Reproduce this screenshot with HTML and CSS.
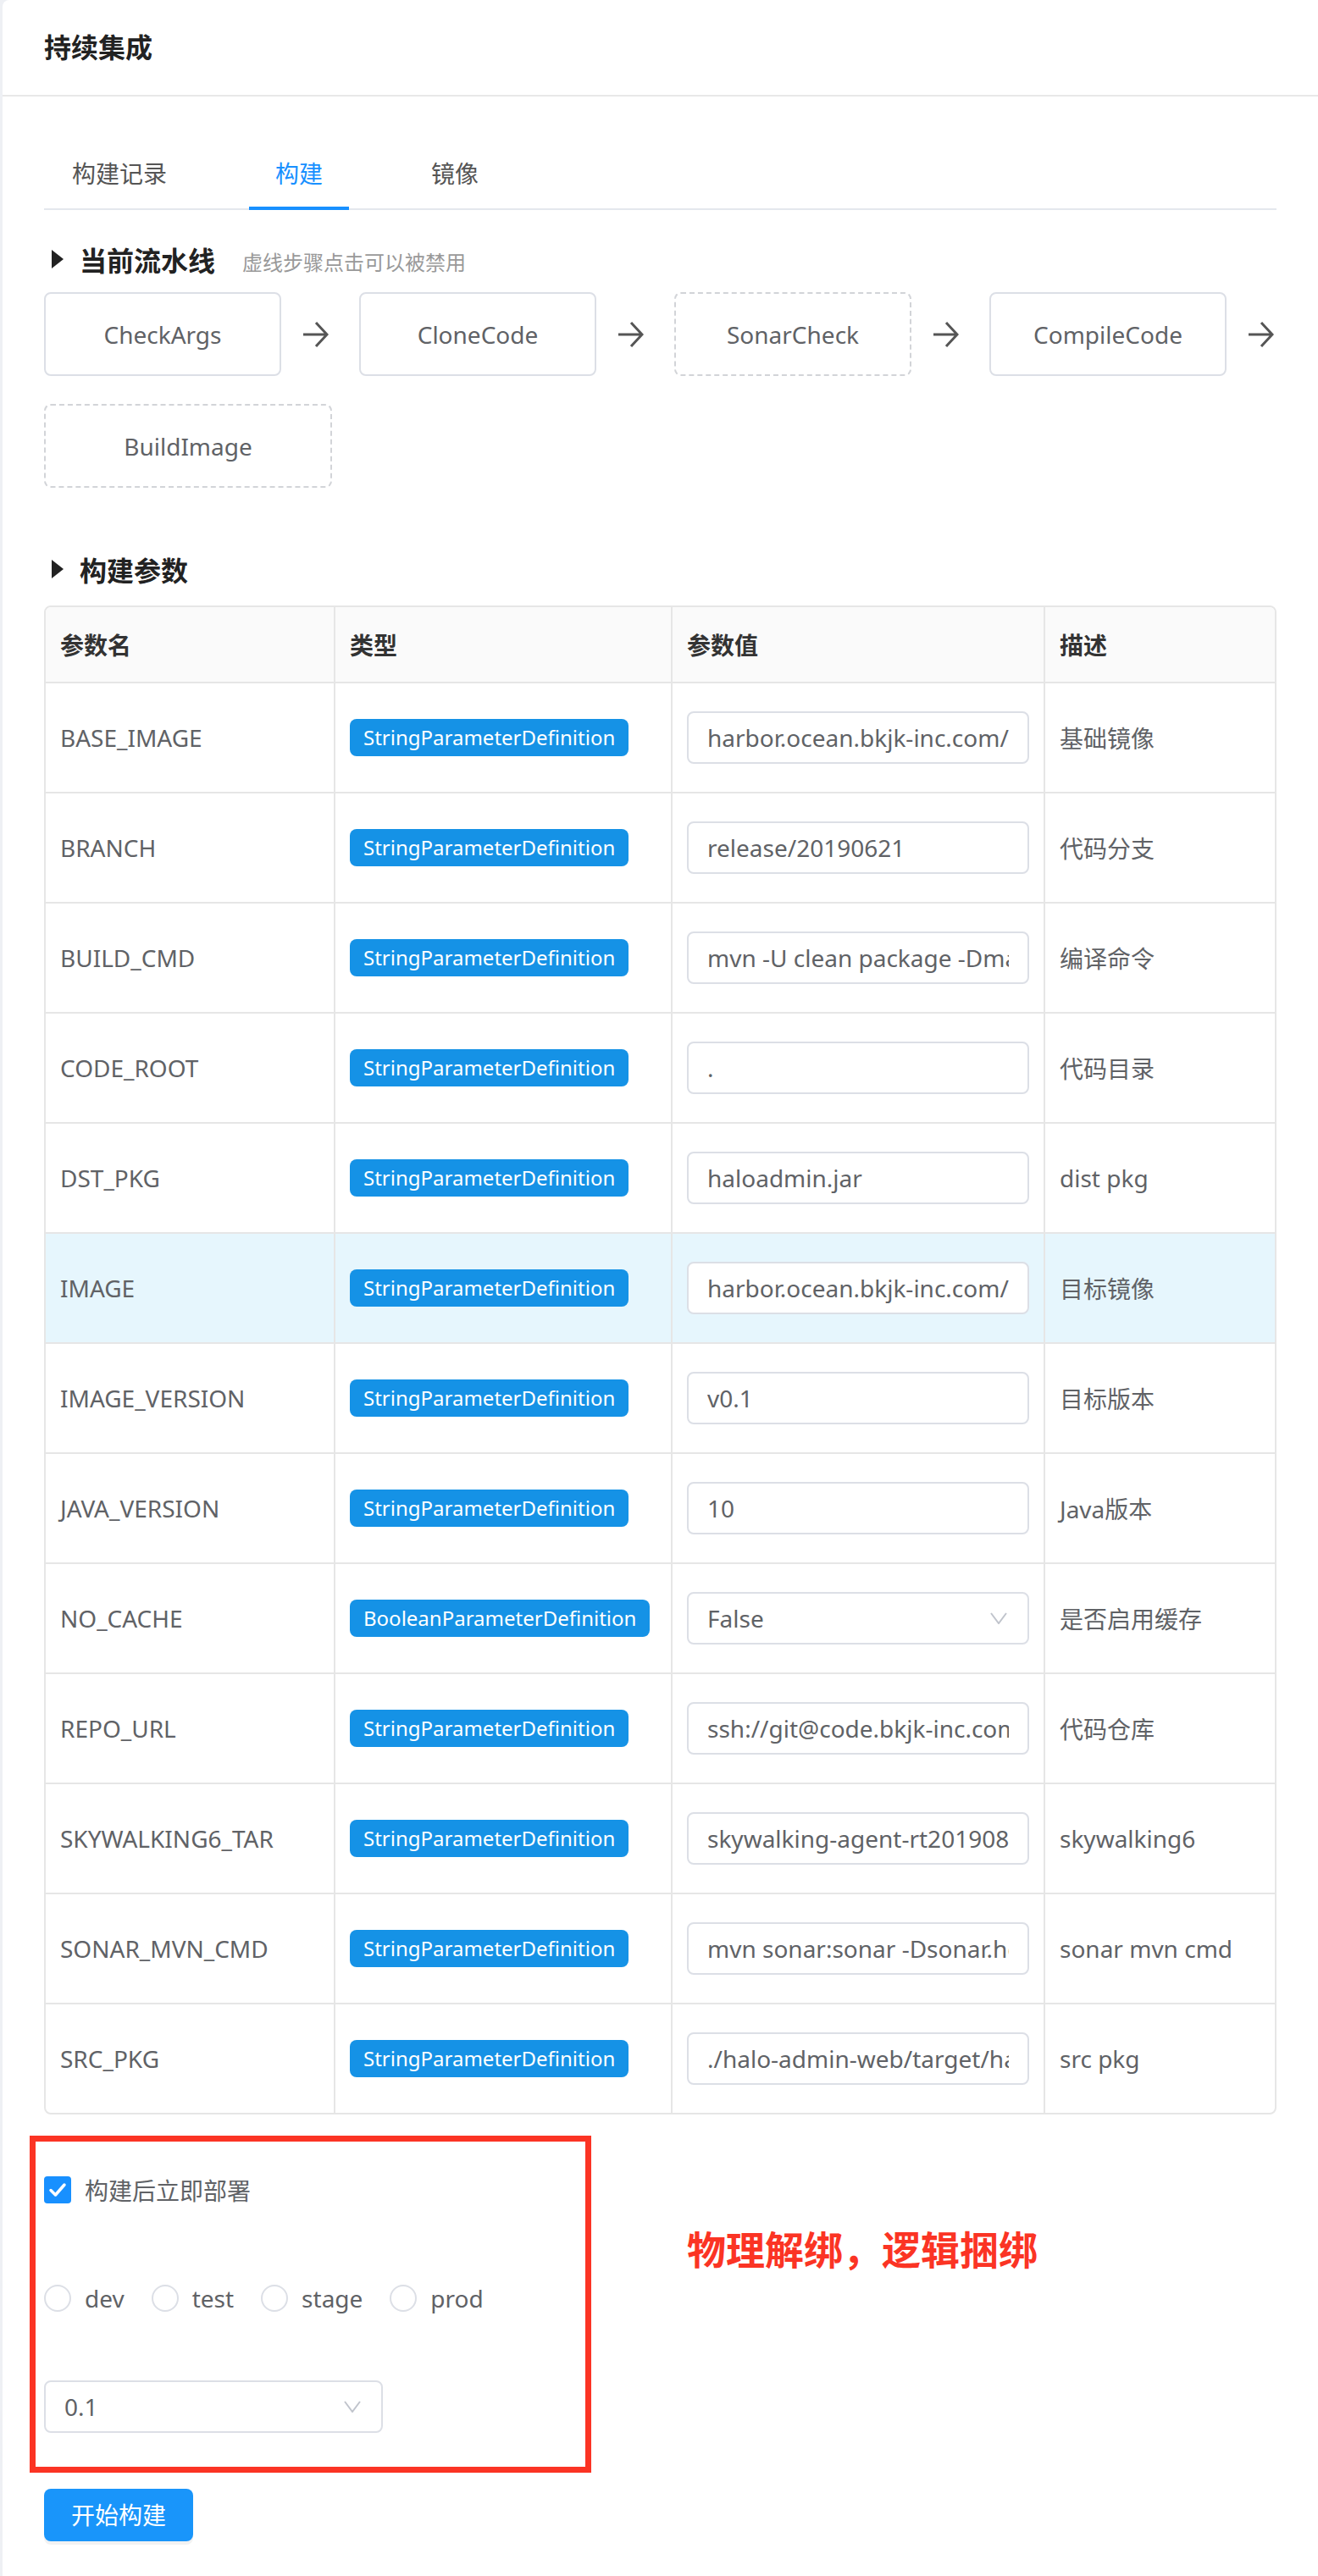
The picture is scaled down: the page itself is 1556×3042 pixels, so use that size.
FILE: index.html
```html
<!DOCTYPE html>
<html lang="zh-CN">
<head>
<meta charset="utf-8">
<title>持续集成</title>
<link rel="stylesheet" href="styles.css">
</head>
<body>
<div class="card">
  <div class="card-header"><span class="card-title">持续集成</span></div>
  <div class="card-body">
    <div class="tabs">
      <div class="tab">构建记录</div>
      <div class="tab active">构建</div>
      <div class="tab">镜像</div>
    </div>

    <div class="section-title section-first">
      <span class="caret"></span><span class="section-name">当前流水线</span><span class="section-hint">虚线步骤点击可以被禁用</span>
    </div>
    <div class="pipeline">
      <div class="step-group">
        <div class="step">CheckArgs</div>
        <svg class="arrow" viewBox="0 0 32 32"><path d="M2 16H30M17 2L30 16L17 30"/></svg>
      </div>
      <div class="step-group">
        <div class="step">CloneCode</div>
        <svg class="arrow" viewBox="0 0 32 32"><path d="M2 16H30M17 2L30 16L17 30"/></svg>
      </div>
      <div class="step-group">
        <div class="step step-dashed">SonarCheck</div>
        <svg class="arrow" viewBox="0 0 32 32"><path d="M2 16H30M17 2L30 16L17 30"/></svg>
      </div>
      <div class="step-group">
        <div class="step">CompileCode</div>
        <svg class="arrow" viewBox="0 0 32 32"><path d="M2 16H30M17 2L30 16L17 30"/></svg>
      </div>
      <div class="step-group">
        <div class="step step-dashed step-wide">BuildImage</div>
      </div>
    </div>

    <div class="section-title section-second">
      <span class="caret"></span><span class="section-name">构建参数</span>
    </div>
    <div class="table">
      <div class="tr thead">
        <div class="td th">参数名</div><div class="td th">类型</div><div class="td th">参数值</div><div class="td th">描述</div>
      </div>
      <div class="tr">
        <div class="td">BASE_IMAGE</div>
        <div class="td"><span class="tag">StringParameterDefinition</span></div>
        <div class="td"><input class="input" readonly value="harbor.ocean.bkjk-inc.com/common/openjdk:10"></div>
        <div class="td">基础镜像</div>
      </div>
      <div class="tr">
        <div class="td">BRANCH</div>
        <div class="td"><span class="tag">StringParameterDefinition</span></div>
        <div class="td"><input class="input" readonly value="release/20190621"></div>
        <div class="td">代码分支</div>
      </div>
      <div class="tr">
        <div class="td">BUILD_CMD</div>
        <div class="td"><span class="tag">StringParameterDefinition</span></div>
        <div class="td"><input class="input" readonly value="mvn -U clean package -Dmaven.test.skip=true"></div>
        <div class="td">编译命令</div>
      </div>
      <div class="tr">
        <div class="td">CODE_ROOT</div>
        <div class="td"><span class="tag">StringParameterDefinition</span></div>
        <div class="td"><input class="input" readonly value="."></div>
        <div class="td">代码目录</div>
      </div>
      <div class="tr">
        <div class="td">DST_PKG</div>
        <div class="td"><span class="tag">StringParameterDefinition</span></div>
        <div class="td"><input class="input" readonly value="haloadmin.jar"></div>
        <div class="td">dist pkg</div>
      </div>
      <div class="tr hl">
        <div class="td">IMAGE</div>
        <div class="td"><span class="tag">StringParameterDefinition</span></div>
        <div class="td"><input class="input" readonly value="harbor.ocean.bkjk-inc.com/library/halo-admin"></div>
        <div class="td">目标镜像</div>
      </div>
      <div class="tr">
        <div class="td">IMAGE_VERSION</div>
        <div class="td"><span class="tag">StringParameterDefinition</span></div>
        <div class="td"><input class="input" readonly value="v0.1"></div>
        <div class="td">目标版本</div>
      </div>
      <div class="tr">
        <div class="td">JAVA_VERSION</div>
        <div class="td"><span class="tag">StringParameterDefinition</span></div>
        <div class="td"><input class="input" readonly value="10"></div>
        <div class="td">Java版本</div>
      </div>
      <div class="tr">
        <div class="td">NO_CACHE</div>
        <div class="td"><span class="tag">BooleanParameterDefinition</span></div>
        <div class="td">
          <div class="select"><span>False</span><svg class="chevron" viewBox="0 0 20 14"><polyline points="1,1 10,13 19,1"/></svg></div>
        </div>
        <div class="td">是否启用缓存</div>
      </div>
      <div class="tr">
        <div class="td">REPO_URL</div>
        <div class="td"><span class="tag">StringParameterDefinition</span></div>
        <div class="td"><input class="input" readonly value="ssh://git@code.bkjk-inc.com/halo/halo-admin.git"></div>
        <div class="td">代码仓库</div>
      </div>
      <div class="tr">
        <div class="td">SKYWALKING6_TAR</div>
        <div class="td"><span class="tag">StringParameterDefinition</span></div>
        <div class="td"><input class="input" readonly value="skywalking-agent-rt20190801.tar.gz"></div>
        <div class="td">skywalking6</div>
      </div>
      <div class="tr">
        <div class="td">SONAR_MVN_CMD</div>
        <div class="td"><span class="tag">StringParameterDefinition</span></div>
        <div class="td"><input class="input" readonly value="mvn sonar:sonar -Dsonar.host.url=http://sonar"></div>
        <div class="td">sonar mvn cmd</div>
      </div>
      <div class="tr">
        <div class="td">SRC_PKG</div>
        <div class="td"><span class="tag">StringParameterDefinition</span></div>
        <div class="td"><input class="input" readonly value="./halo-admin-web/target/halo-admin.jar"></div>
        <div class="td">src pkg</div>
      </div>
    </div>

    <div class="deploy">
      <div class="deploy-box">
        <div class="form-row">
          <span class="checkbox"><svg viewBox="0 0 32 32"><path d="M8 16.5L13.5 22L24 10"/></svg></span>
          <span class="form-label">构建后立即部署</span>
        </div>
        <div class="form-row">
          <span class="radio"><span class="radio-dot"></span><span class="form-label">dev</span></span>
          <span class="radio"><span class="radio-dot"></span><span class="form-label">test</span></span>
          <span class="radio"><span class="radio-dot"></span><span class="form-label">stage</span></span>
          <span class="radio"><span class="radio-dot"></span><span class="form-label">prod</span></span>
        </div>
        <div class="form-row">
          <div class="select deploy-select"><span>0.1</span><svg class="chevron" viewBox="0 0 20 14"><polyline points="1,1 10,13 19,1"/></svg></div>
        </div>
      </div>
      <div class="annotation">物理解绑，逻辑捆绑</div>
    </div>

    <div class="btn">开始构建</div>
  </div>
</div>
</body>
</html>
```

FILE: styles.css
```css
* {
  box-sizing: border-box;
}

body {
  margin: 0;
  background: #eef0f4;
  font-family: "Noto Sans", "Noto Sans CJK SC", sans-serif;
  color: #606266;
}

.card {
  margin-left: 3px;
  background: #fff;
  border-top-left-radius: 8px;
  min-height: 3042px;
}

.card-header {
  height: 114px;
  border-bottom: 2px solid #e8e8e8;
  display: flex;
  align-items: center;
  padding-left: 49px;
}

.card-title {
  font-size: 32px;
  line-height: 48px;
  font-weight: 600;
  color: #222;
}

.card-body {
  padding: 50px 49px 0 49px;
}

/* tabs */
.tabs {
  display: flex;
  gap: 66px;
  padding-left: 2px;
  border-bottom: 2px solid #e4e7ed;
}

.tab {
  position: relative;
  height: 82px;
  line-height: 82px;
  padding: 0 31px;
  font-size: 28px;
  color: #555;
}

.tab.active {
  color: #1890ff;
}

.tab.active::after {
  content: "";
  position: absolute;
  left: 0;
  right: 0;
  bottom: -2px;
  height: 4px;
  background: #1890ff;
}

/* section titles */
.section-title {
  display: flex;
  align-items: center;
  height: 48px;
}

.section-first {
  margin-top: 34px;
}

.section-second {
  margin-top: 72px;
}

.caret {
  width: 0;
  height: 0;
  border-left: 14px solid #222;
  border-top: 11px solid transparent;
  border-bottom: 11px solid transparent;
  margin-left: 9px;
  margin-right: 19px;
}

.section-name {
  font-size: 32px;
  font-weight: 600;
  color: #222;
}

.section-hint {
  font-size: 24px;
  color: #999;
  margin-left: 32px;
  margin-top: 4px;
}

/* pipeline */
.pipeline {
  display: flex;
  flex-wrap: wrap;
  row-gap: 33px;
  column-gap: 36px;
  margin-top: 15px;
}

.step-group {
  display: flex;
  align-items: center;
}

.step {
  width: 280px;
  height: 99px;
  border: 2px solid #dcdfe6;
  border-radius: 8px;
  display: flex;
  align-items: center;
  justify-content: center;
  font-size: 28px;
  color: #606266;
}

.step-dashed {
  border-style: dashed;
  border-color: #d2d4d8;
}

.step-wide {
  width: 340px;
}

.arrow {
  width: 32px;
  height: 32px;
  margin-left: 24px;
  fill: none;
  stroke: #555;
  stroke-width: 3;
}

/* table */
.table {
  margin-top: 19px;
  border: 2px solid #e6e6e6;
  border-radius: 8px;
  overflow: hidden;
}

.tr {
  display: grid;
  grid-template-columns: 342px 398px 440px 1fr;
  height: 130px;
  border-bottom: 2px solid #e6e6e6;
}

.tr:last-child {
  border-bottom: none;
  height: 128px;
}

.tr.thead {
  height: 90px;
  background: #fafafa;
}

.tr.hl {
  background: #e6f6fd;
}

.td {
  display: flex;
  align-items: center;
  min-width: 0;
  padding: 0 17px;
  border-right: 2px solid #e6e6e6;
  font-size: 28px;
  color: #606266;
  white-space: nowrap;
  overflow: hidden;
}

.td:last-child {
  border-right: none;
}

.th {
  font-weight: 600;
  color: #333;
}

.tag {
  display: inline-block;
  height: 44px;
  line-height: 44px;
  padding: 0 16px;
  background: #1592e6;
  color: #fff;
  font-size: 24px;
  border-radius: 8px;
  white-space: nowrap;
}

.input {
  display: block;
  width: 100%;
  height: 62px;
  border: 2px solid #dcdfe6;
  border-radius: 8px;
  padding: 0 22px;
  font-family: inherit;
  font-size: 28px;
  color: #606266;
  background: #fff;
  outline: none;
  margin: 0;
}

.select {
  display: flex;
  align-items: center;
  justify-content: space-between;
  width: 100%;
  height: 62px;
  border: 2px solid #dcdfe6;
  border-radius: 8px;
  padding: 0 24px 0 22px;
  font-size: 28px;
  color: #606266;
  background: #fff;
}

.chevron {
  width: 20px;
  height: 14px;
  fill: none;
  stroke: #c0c4cc;
  stroke-width: 2;
}

/* deploy area */
.deploy {
  position: relative;
  margin-top: 25px;
}

.deploy-box {
  margin-left: -17px;
  width: 663px;
  border: 7px solid #fb3424;
  padding: 17px 0 31px 10px;
}

.form-row {
  height: 80px;
  display: flex;
  align-items: center;
}

.form-row + .form-row {
  margin-top: 48px;
}

.form-label {
  font-size: 28px;
  color: #606266;
}

.checkbox {
  width: 32px;
  height: 32px;
  border-radius: 4px;
  background: #1890ff;
  margin-right: 16px;
  display: flex;
}

.checkbox svg {
  width: 32px;
  height: 32px;
  fill: none;
  stroke: #fff;
  stroke-width: 3.5;
  stroke-linecap: round;
  stroke-linejoin: round;
}

.radio {
  display: flex;
  align-items: center;
  margin-right: 32px;
}

.radio-dot {
  width: 32px;
  height: 32px;
  border: 2px solid #dcdfe6;
  border-radius: 50%;
  margin-right: 16px;
}

.deploy-select {
  width: 400px;
}

.annotation {
  position: absolute;
  left: 759px;
  top: 107px;
  font-size: 46px;
  line-height: 54px;
  font-weight: 700;
  color: #fb3424;
  white-space: nowrap;
}

.btn {
  display: inline-block;
  margin-top: 19px;
  height: 62px;
  line-height: 62px;
  padding: 0 32px;
  background: #1995fa;
  color: #fff;
  border-radius: 8px;
  font-size: 28px;
  box-shadow: 0 4px 0 #f2f2f2;
}
```
